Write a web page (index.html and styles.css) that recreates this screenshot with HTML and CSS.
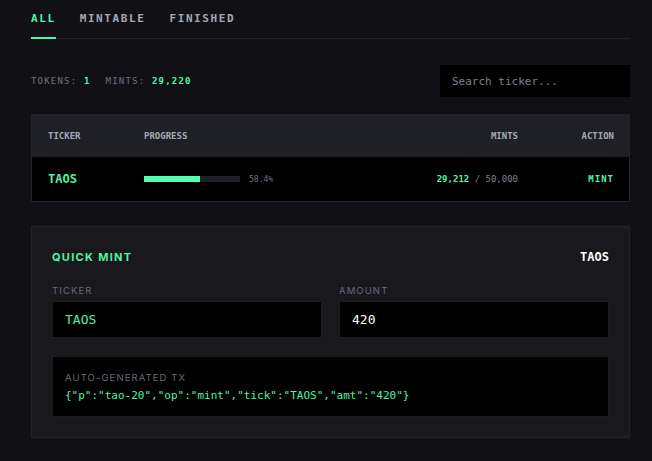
FILE: index.html
```html
<!DOCTYPE html>
<html lang="en">
<head>
  <meta charset="UTF-8">
  <title>TAO-20 Mint</title>
  <link rel="stylesheet" href="styles.css">
</head>
<body>

<div class="page">

  <nav class="tabs">
    <a class="tab active" href="#">ALL</a>
    <a class="tab" href="#">MINTABLE</a>
    <a class="tab" href="#">FINISHED</a>
  </nav>

  <div class="toolbar">
    <div class="stats">
      <span class="stat">TOKENS: <b>1</b></span>
      <span class="stat">MINTS: <b>29,220</b></span>
    </div>
    <input class="search" type="text" placeholder="Search ticker...">
  </div>

  <table class="tokens">
    <thead>
      <tr>
        <th class="col-ticker">TICKER</th>
        <th>PROGRESS</th>
        <th class="right">MINTS</th>
        <th class="right col-action">ACTION</th>
      </tr>
    </thead>
    <tbody>
      <tr>
        <td class="col-ticker tick">TAOS</td>
        <td>
          <div class="progress">
            <div class="bar"><div class="fill" style="width: 58.4%"></div></div>
            <span class="pct">58.4%</span>
          </div>
        </td>
        <td class="right mints"><b>29,212</b> / 50,000</td>
        <td class="right col-action"><a class="mint-link" href="#">MINT</a></td>
      </tr>
    </tbody>
  </table>

  <section class="quick">
    <div class="quick-head">
      <h2>QUICK MINT</h2>
      <span class="quick-tick">TAOS</span>
    </div>
    <div class="fields">
      <label class="field">
        <span class="label">TICKER</span>
        <input class="box green" type="text" value="TAOS">
      </label>
      <label class="field">
        <span class="label">AMOUNT</span>
        <input class="box" type="text" value="420">
      </label>
    </div>
    <div class="tx">
      <span class="label">AUTO-GENERATED TX</span>
      <code>{"p":"tao-20","op":"mint","tick":"TAOS","amt":"420"}</code>
    </div>
  </section>

</div>

</body>
</html>
```

FILE: styles.css
```css
body {
  margin: 0;
  background-color: #111115;
  color: #9aa0ad;
  font-family: "DejaVu Sans Mono", monospace;
}
.page {
  width: 599px;
  margin-left: 31px;
}
.tabs {
  display: flex;
  gap: 24px;
  border-bottom: 1px solid #222228;
  height: 38px;
}
.tab {
  font-size: 11px;
  font-weight: bold;
  letter-spacing: 1.6px;
  color: #a4a9b6;
  text-decoration: none;
  padding-top: 12px;
  margin-bottom: -1px;
  border-bottom: 2px solid transparent;
  box-sizing: border-box;
}
.tab.active {
  color: #4cf5a5;
  border-bottom-color: #4cf5a5;
}
.toolbar {
  display: flex;
  justify-content: space-between;
  align-items: center;
  margin-top: 26px;
}
.stats {
  display: flex;
  gap: 15px;
  font-size: 9px;
  letter-spacing: 1.2px;
  color: #6e7280;
}
.stat b {
  color: #4cf5a5;
}
.search {
  width: 190px;
  height: 32px;
  box-sizing: border-box;
  background: #000;
  border: none;
  padding: 0 12px;
  font-family: "DejaVu Sans Mono", monospace;
  font-size: 11px;
  color: #ddd;
  outline: none;
}
.search::placeholder {
  color: #7d8290;
}
.tokens {
  width: 100%;
  border-collapse: collapse;
  margin-top: 17px;
  border: 1px solid #222228;
}
.tokens th {
  background-color: #1f2025;
  height: 42px;
  font-size: 9px;
  font-weight: bold;
  color: #a4a9b6;
  text-align: left;
  padding: 0;
}
.tokens td {
  background-color: #000;
  height: 44px;
  padding: 0;
  font-size: 9px;
  color: #7d8290;
}
.col-ticker {
  padding-left: 16px !important;
  width: 96px;
}
.col-action {
  padding-right: 15px !important;
  width: 96px;
}
.right {
  text-align: right !important;
}
.tick {
  font-size: 12px !important;
  font-weight: bold;
  color: #4cf5a5 !important;
}
.progress {
  display: flex;
  align-items: center;
  gap: 9px;
}
.bar {
  width: 96px;
  height: 6px;
  background: #1f2025;
}
.fill {
  height: 100%;
  background: #52ffb4;
}
.pct {
  font-size: 8px;
  color: #6e7280;
}
.mints b {
  color: #4cf5a5;
}
.mint-link {
  color: #4cf5a5;
  font-weight: bold;
  letter-spacing: 1px;
  text-decoration: none;
}
.quick {
  margin-top: 24px;
  background: #18181d;
  border: 1px solid #222228;
  padding: 20px;
}
.quick-head {
  display: flex;
  justify-content: space-between;
  align-items: center;
  margin-top: 3px;
}
.quick h2 {
  margin: 0;
  font-family: Inter, "Liberation Sans", sans-serif;
  font-size: 11px;
  letter-spacing: 1.3px;
  color: #4cf5a5;
}
.quick-tick {
  font-size: 12px;
  font-weight: bold;
  color: #fff;
}
.fields {
  display: flex;
  gap: 17px;
  margin-top: 21px;
}
.field {
  flex: 1;
  display: flex;
  flex-direction: column;
}
.label {
  font-family: Inter, "Liberation Sans", sans-serif;
  font-size: 9.5px;
  letter-spacing: 1.1px;
  color: #666b78;
}
.box {
  margin-top: 5px;
  height: 37px;
  box-sizing: border-box;
  background: #000;
  border: 1px solid #1c1c22;
  padding: 0 12px;
  font-family: "DejaVu Sans Mono", monospace;
  font-size: 13px;
  color: #fff;
  outline: none;
}
.box.green {
  color: #4cf5a5;
}
.tx {
  margin-top: 18px;
  background: #000;
  border: 1px solid #1c1c22;
  padding: 15px 12px 14px;
  display: flex;
  flex-direction: column;
  gap: 6px;
}
.tx code {
  font-family: "DejaVu Sans Mono", monospace;
  font-size: 11px;
  color: #4cf5a5;
}
```
